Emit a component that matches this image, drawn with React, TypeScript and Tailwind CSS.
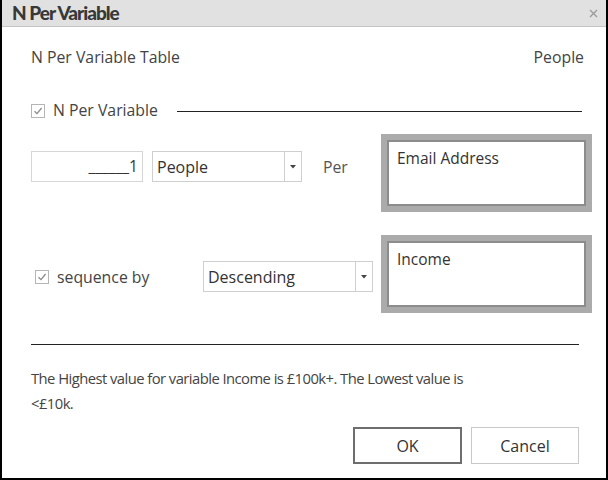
import React from "react";

const font = { fontFamily: '"Open Sans", "Noto Sans", sans-serif' };

function Check({ className = "" }: { className?: string }) {
  return (
    <div className={"w-[14px] h-[14px] border border-[#b5b5b5] bg-white flex items-center justify-center shrink-0 " + className}>
      <svg width="10" height="10" viewBox="0 0 10 10">
        <path d="M1.5 5.2 L4 7.6 L8.6 2" fill="none" stroke="#8a8a8a" strokeWidth="1.3" />
      </svg>
    </div>
  );
}

function Select({ label, w }: { label: string; w: string }) {
  return (
    <div className={"h-[31px] border border-[#cfcfcf] bg-white flex items-stretch shrink-0 " + w}>
      <div className="flex-1 flex items-center pl-[4px] text-[16px] text-[#333]">{label}</div>
      <div className="w-[17px] border-l border-[#cfcfcf] flex items-center justify-center">
        <svg width="6" height="4" viewBox="0 0 6 4">
          <path d="M0 0 L6 0 L3 3.5 Z" fill="#444" />
        </svg>
      </div>
    </div>
  );
}

function VarBox({ label }: { label: string }) {
  return (
    <div className="w-[211px] h-[78px] bg-[#ababab] p-[6px] shrink-0">
      <div className="w-full h-full border-2 border-[#8c8c8c] bg-white pl-[8px] pt-[5px] text-[15.5px] leading-[22px] text-[#333]">
        {label}
      </div>
    </div>
  );
}

export default function App() {
  return (
    <div className="w-[608px] h-[480px] bg-white border-2 border-t-0 border-black flex flex-col" style={font}>
      <div className="h-[27px] bg-[#e1e1e1] border-b border-[#c4c4c4] flex items-center justify-between pl-[10px] pr-[8px] shrink-0">
        <span className="text-[19px] leading-[24px] font-bold tracking-[-1px] text-[#383838]" style={{ fontFamily: '"Lato", sans-serif', fontWeight: 900 }}>
          N Per Variable
        </span>
        <svg width="9" height="9" viewBox="0 0 9 9">
          <path d="M1 1 L8 8 M8 1 L1 8" stroke="#9a9a9a" strokeWidth="1.3" />
        </svg>
      </div>

      <div className="flex flex-col pl-[29px] text-[#444]">
        <div className="mt-[21px] h-[20px] flex items-center justify-between pr-[22px] text-[15.8px]">
          <span>N Per Variable Table</span>
          <span>People</span>
        </div>

        <div className="mt-[33px] h-[20px] flex items-center pr-[24px]">
          <Check />
          <span className="ml-[8px] text-[15.8px]">N Per Variable</span>
          <div className="ml-[19px] flex-1 h-px bg-[#222]" />
        </div>

        <div className="mt-[13px] flex items-start pr-[14px]">
          <div className="mt-[17px] w-[112px] h-[31px] border border-[#d6d6d6] flex items-center justify-end pr-[4px] text-[15.5px] text-[#333]">
            ______1
          </div>
          <div className="mt-[17px] ml-[9px]">
            <Select label="People" w="w-[150px]" />
          </div>
          <span className="mt-[22px] ml-[21px] text-[15.8px] text-[#555]">Per</span>
          <div className="ml-auto">
            <VarBox label="Email Address" />
          </div>
        </div>

        <div className="mt-[23px] flex items-start pr-[14px]">
          <div className="mt-[35px] ml-[4px] flex items-center">
            <Check />
            <span className="ml-[8px] text-[15.8px] leading-[14px]">sequence by</span>
          </div>
          <div className="mt-[26px] ml-auto mr-[8px]">
            <Select label="Descending" w="w-[170px]" />
          </div>
          <VarBox label="Income" />
        </div>

        <div className="mt-[31px] h-px bg-[#222] mr-[27px]" />

        <p className="mt-[21px] text-[14.8px] tracking-[-0.55px] leading-[25px] text-[#444] w-[440px]">
          The Highest value for variable Income is £100k+. The Lowest value is &lt;£10k.
        </p>

        <div className="mt-[11px] flex justify-end gap-[9px] pr-[27px]">
          <button className="w-[109px] h-[37px] border-2 border-[#6e6e6e] bg-white text-[16px] text-[#333]">OK</button>
          <button className="w-[108px] h-[37px] border border-[#c8c8c8] bg-white text-[16px] text-[#333]">Cancel</button>
        </div>
      </div>
    </div>
  );
}
